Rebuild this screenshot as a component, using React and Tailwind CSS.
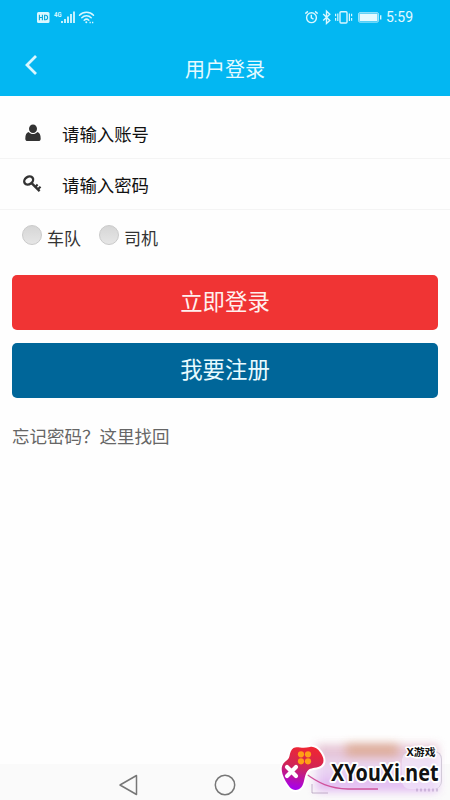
import React, { useState } from "react";

/* -------------------- Icons -------------------- */
function SignalIcons() {
  return (
    <svg width="60" height="16" viewBox="0 0 60 16" fill="none">
      <rect x="1" y="3" width="12.5" height="11" rx="1.5" fill="#d9f7ff" />
      <path
        d="M3.4 5.8v5.4M6.4 5.8v5.4M3.4 8.5h3M8.6 6.3v4.4h1c1.3 0 2-.8 2-2.2s-.7-2.2-2-2.2z"
        stroke="#08a9dc"
        strokeWidth="1.1"
      />
      <text x="18" y="7.5" fontSize="8" fontWeight="700" fill="#d9f7ff" fontFamily="Roboto, sans-serif" textLength="7.5" lengthAdjust="spacingAndGlyphs">
        4G
      </text>
      <path d="M26 14v-2M29 14v-4M32 14V7.500M35 14V5M38 14V2.500" stroke="#d9f7ff" strokeWidth="1.8" />
      <g stroke="#d9f7ff" strokeWidth="1.5" strokeLinecap="round">
        <path d="M43.500 6.200c3.800-3.900 10.200-3.900 14 0" />
        <path d="M45.800 8.800c2.600-2.600 6.800-2.600 9.400 0" />
        <path d="M48.200 11.200c1.300-1.200 3.300-1.200 4.600 0" />
      </g>
      <circle cx="50.300" cy="13.200" r="1" fill="#d9f7ff" />
      <path d="M53.500 13.500h1.300M56 13.500h1.300" stroke="#d9f7ff" strokeWidth="1.4" />
    </svg>
  );
}

function DeviceIcons() {
  return (
    <svg width="78" height="16" viewBox="0 0 78 16" fill="none" stroke="#d9f7ff" strokeWidth="1.4">
      <circle cx="7.500" cy="8.700" r="4.900" />
      <path d="M7.300 5.800v3.100l2.200 1.300M1.300 4.600l2.600-2.200M11.100 2.400l2.600 2.200" />
      <path d="M19.200 5l6.600 6.400-3.300 3V2.200l3.300 3-6.600 6.400" />
      <rect x="36" y="2.700" width="7" height="11.300" rx="1" />
      <path d="M33.800 4.500v7.500M31.600 4.800v2.400M31.600 9v2.800M45.400 4.500v7.500M47.600 4.800v2.400M47.600 9v2.800" strokeWidth="1.200" />
      <rect x="54.500" y="3.600" width="20" height="9.600" rx="1.500" strokeWidth="1" opacity=".7" />
      <rect x="55.500" y="4.600" width="18" height="7.600" fill="#e4faff" stroke="none" />
      <path d="M76.700 6.300v4.200" />
    </svg>
  );
}

function UserIcon() {
  return (
    <svg width="16" height="18" viewBox="0 0 16 18" fill="#333">
      <ellipse cx="8" cy="4.700" rx="4" ry="4.300" />
      <path d="M3.700 8C1.500 8.500.3 10.800.3 14.700c0 1.600.9 2.400 2.300 2.400h10.800c1.400 0 2.300-.8 2.300-2.400 0-3.900-1.200-6.200-3.400-6.700C11 9.400 9.700 10 8 10S5 9.400 3.700 8z" />
    </svg>
  );
}

function KeyIcon() {
  return (
    <svg className="mr-[2px]" width="21" height="20" viewBox="0 0 21 20" fill="none" stroke="#333">
      <ellipse cx="7" cy="6.300" rx="5" ry="3.900" transform="rotate(-35 7 6.300)" strokeWidth="2.500" />
      <path d="M9.800 8.800l8.700 8.700" strokeWidth="2.500" />
      <path d="M13.700 13.300l2.700-2.700M16.300 15.900l3.200-3.100" strokeWidth="2.200" />
    </svg>
  );
}

function GamepadLogo() {
  return (
    <svg width="60" height="65" viewBox="0 0 60 65" fill="none">
      <defs>
        <linearGradient id="pad" x1="32" y1="13" x2="24" y2="54" gradientUnits="userSpaceOnUse">
          <stop offset="0" stopColor="#ed2635" />
          <stop offset=".45" stopColor="#cf2558" />
          <stop offset="1" stopColor="#a600ee" />
        </linearGradient>
      </defs>
      <path
        d="M23.500 13c2-1.300 4.500-.7 6.500-.5 3 .3 6 .4 10-.5 4-.8 7.500 1.500 10 5 2 2.800 3.500 5.500 3.500 8.500 0 4-3 6.300-7 7-5 .8-8 1-10 5-2.500 5-2 10.500-5 14.500-3 3.800-8.500 3.800-11.500.5-3.500-4-6-9-7.500-13.500-1.500-5-1-9 2.300-12 2-1.800 4.200-3 4.700-6 .5-3 1.500-6.500 4-8z"
        fill="url(#pad)"
        stroke="#fff"
        strokeWidth="4"
        paintOrder="stroke"
      />
      <path d="M17 32l9 9M26 32l-9 9" stroke="#fff" strokeWidth="4.200" strokeLinecap="round" />
      <g fill="#ff9f16">
        <circle cx="31" cy="19.300" r="3.100" />
        <circle cx="38" cy="19.300" r="3.100" />
        <circle cx="31" cy="26.300" r="3.100" />
        <circle cx="38" cy="26.300" r="3.100" />
      </g>
    </svg>
  );
}

/* -------------------- Form parts -------------------- */
function Field({ icon, type, placeholder, name }) {
  return (
    <label className="flex h-[51px] items-center border-b border-[#f4f4f4] pl-[22px]">
      <span className="flex w-[22px] justify-center">{icon}</span>
      <input
        type={type}
        name={name}
        placeholder={placeholder}
        className="ml-[18px] h-full w-[340px] bg-transparent pt-1 text-[17.400px] text-black outline-none placeholder:text-[#111]"
      />
    </label>
  );
}

function RoleOption({ label, checked, onSelect }) {
  return (
    <button type="button" onClick={onSelect} className="flex items-start">
      <span
        className={`h-5 w-5 rounded-full border bg-linear-to-b from-[#d6d6d6] to-[#e6e6e6] ${
          checked ? "border-[#006699]" : "border-[#cacaca]"
        }`}
      />
      <span className="ml-[5px] pt-[2px] text-[17px] leading-6 text-[#333]">{label}</span>
    </button>
  );
}

function Watermark() {
  return (
    <div className="absolute right-0 bottom-0 h-[65px] w-[180px]">
      <div className="absolute top-[10px] left-[46px] h-[46px] w-[122px] bg-linear-to-b from-[#dfb3c4] via-[#ead6f4] to-[#dba8ee] opacity-90 blur-[5px]" />
      <div className="absolute top-[9px] left-[76px] h-[12px] w-[52px] bg-[#d79a6c] opacity-60 blur-[5px]" />
      <div className="absolute top-[16px] left-[132px] h-[38px] w-[40px] rounded-lg border border-l-0 border-b-0 border-[#d2cad9] bg-[#f3ebfb]/60" />
      <svg className="absolute inset-0" width="180" height="65" viewBox="0 0 180 65" fill="none">
        <path d="M35 38c13 10 25 15.500 43 16h30" stroke="#d0529c" strokeWidth="1.300" />
        <path d="M42 49v9h16" stroke="#a286ac" opacity=".6" />
        <path d="M146 55h24" stroke="#9478ae" strokeWidth="3" strokeDasharray="2 2" opacity=".35" />
      </svg>
      <div className="absolute top-0 left-0">
        <GamepadLogo />
      </div>
      <svg className="absolute inset-0 overflow-visible" width="180" height="65" viewBox="0 0 180 65">
        <g
          fill="#111"
          stroke="#fff"
          strokeLinejoin="round"
          paintOrder="stroke"
          fontWeight="700"
        >
          <text x="61" y="45.500" fontSize="24" strokeWidth="4" textLength="107.500" lengthAdjust="spacingAndGlyphs" fontFamily="'Noto Sans', sans-serif">
            XYouXi.net
          </text>
          <text x="136.500" y="20.800" fontSize="10.500" strokeWidth="3" textLength="29" lengthAdjust="spacingAndGlyphs" fontFamily="'Noto Sans', 'Noto Sans CJK SC', sans-serif">
            X游戏
          </text>
        </g>
      </svg>
    </div>
  );
}

/* ================================================= */
export default function App() {
  const [role, setRole] = useState(null);

  return (
    <div className="relative flex h-[800px] w-[450px] flex-col overflow-hidden bg-[#fefefe] font-['Roboto','Noto_Sans_CJK_SC',sans-serif]">
      {/* ================= HEADER ================= */}
      <header className="h-24 bg-[#03b7f2] text-[#e4faff]">
        <div className="flex h-[34px] items-center justify-between pr-[37px] pl-9">
          <SignalIcons />
          <div className="flex items-center gap-[4px]">
            <DeviceIcons />
            <span className="text-[14px] leading-4">5:59</span>
          </div>
        </div>
        <div className="grid h-[62px] grid-cols-[1fr_auto_1fr] items-center">
          <button type="button" aria-label="返回" className="pl-[25px]">
            <svg width="13" height="20" viewBox="0 0 13 20" fill="none" stroke="#d9f7ff" strokeWidth="2.800">
              <path d="M11 1L2 10l9 9" />
            </svg>
          </button>
          <h1 className="pt-[9px] text-[20px] leading-7">用户登录</h1>
        </div>
      </header>

      {/* ================= FORM ================= */}
      <main className="flex-1 pt-3">
        <Field icon={<UserIcon />} type="text" name="account" placeholder="请输入账号" />
        <Field icon={<KeyIcon />} type="password" name="password" placeholder="请输入密码" />

        <div className="flex h-[65px] items-start gap-[18px] pt-[15px] pl-[22px]">
          <RoleOption label="车队" checked={role === "fleet"} onSelect={() => setRole("fleet")} />
          <RoleOption label="司机" checked={role === "driver"} onSelect={() => setRole("driver")} />
        </div>

        <div className="flex flex-col gap-[13px] px-3">
          <button type="button" className="h-[55px] rounded-[5px] bg-[#f03434] text-[22.400px] text-[#fff0ee]">
            立即登录
          </button>
          <button type="button" className="h-[55px] rounded-[5px] bg-[#006699] text-[22.400px] text-[#e8faff]">
            我要注册
          </button>
        </div>

        <p className="mt-[27px] px-3 text-[17.500px] leading-6 text-[#666]">忘记密码？这里找回</p>
      </main>

      {/* ================= NAV BAR ================= */}
      <nav className="flex h-9 items-center bg-[#fafafa] pt-[6px] pl-[118px]">
        <svg width="20" height="22" viewBox="0 0 20 22" fill="none" stroke="#777" strokeWidth="1.500">
          <path d="M2 11L18.500 1.500v19z" strokeLinejoin="round" />
        </svg>
        <svg className="ml-[76px]" width="22" height="22" viewBox="0 0 22 22" fill="none" stroke="#777" strokeWidth="1.500">
          <circle cx="11" cy="11" r="9.700" />
        </svg>
      </nav>

      <Watermark />
    </div>
  );
}
